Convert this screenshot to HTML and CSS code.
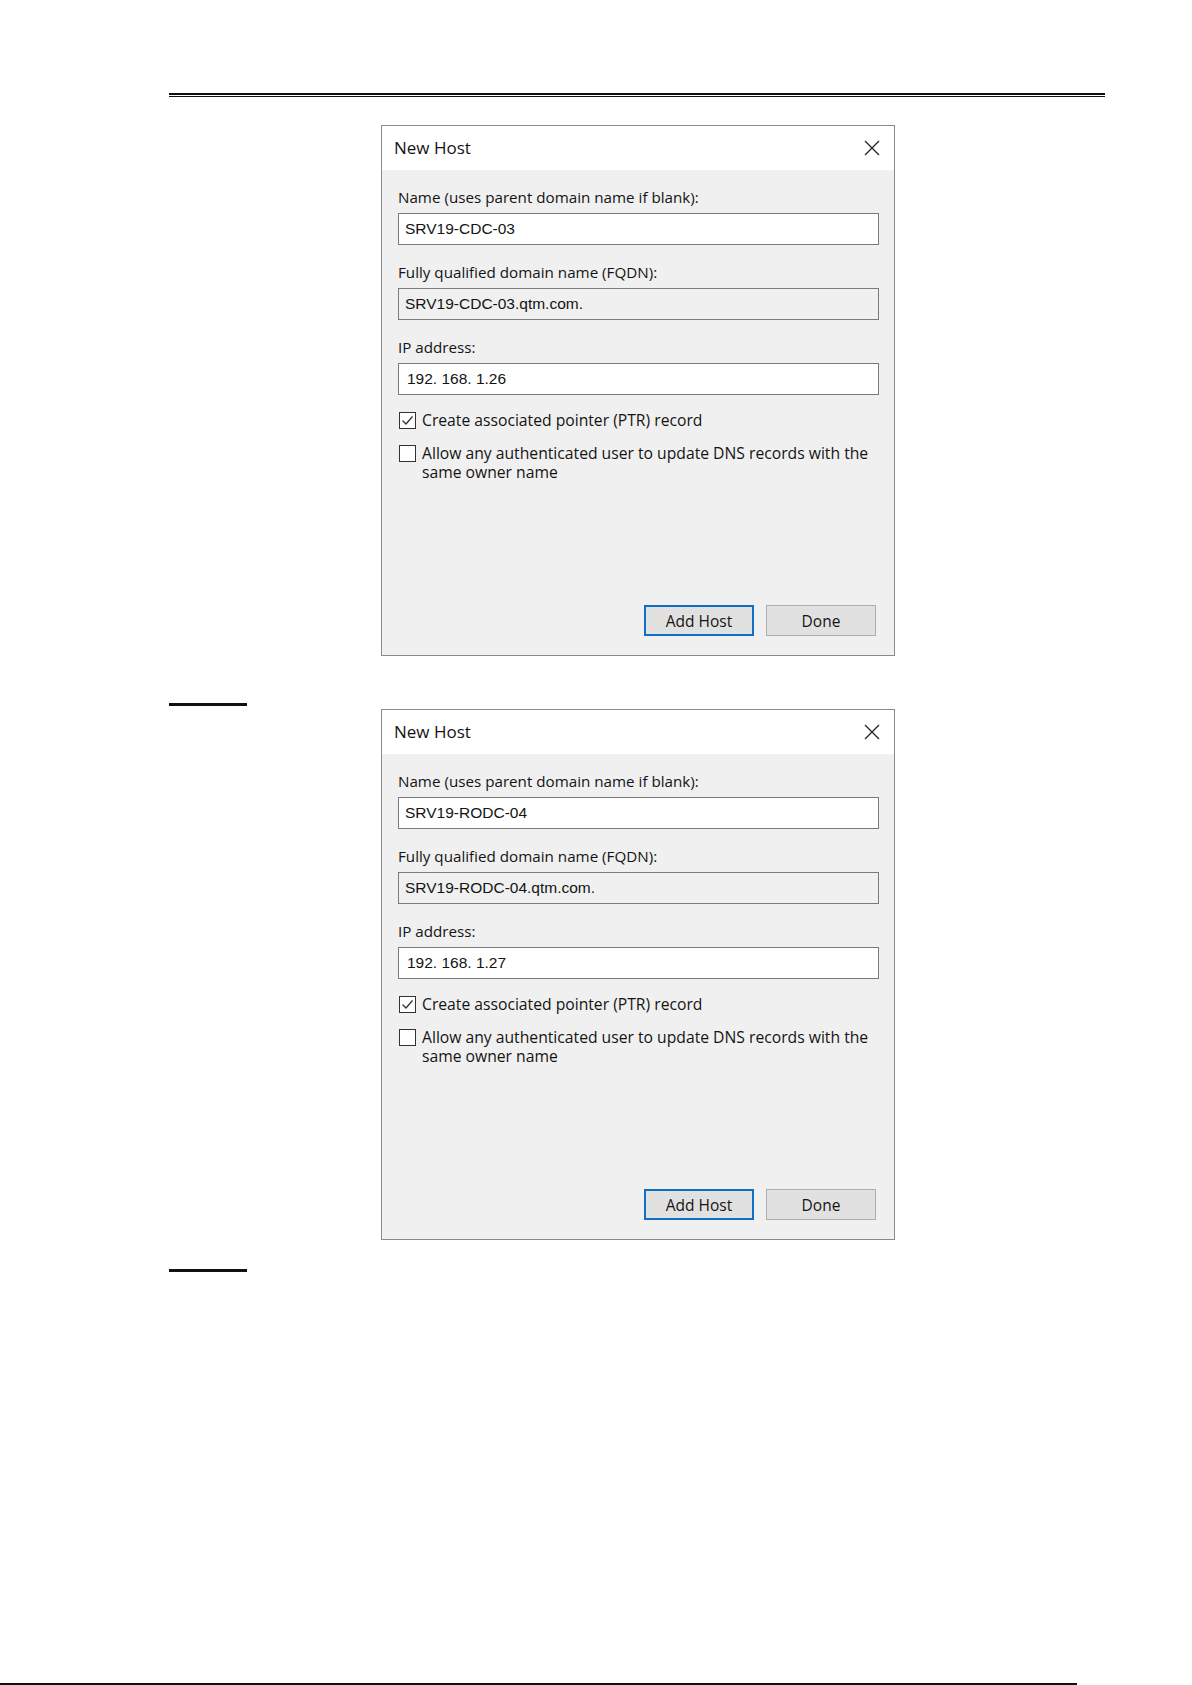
FILE: index.html
```html
<!DOCTYPE html>
<html>
	<head>
		<meta charset="UTF-8">
		<title>New Host</title>
		<link rel="stylesheet" href="styles.css">
	</head>
	<body>
		<div class="page">
			<div class="rule-double"></div>

			<div class="dialog first">
				<div class="dialog-title">
					<span>New Host</span>
					<svg class="dialog-close" width="16" height="16" viewBox="0 0 16 16"><path d="M1 1L15 15M15 1L1 15" stroke="#222" stroke-width="1.3" fill="none"/></svg>
				</div>
				<div class="dialog-body">
					<div class="field-label">Name (uses parent domain name if blank):</div>
					<div class="field-box">SRV19-CDC-03</div>
					<div class="field-label">Fully qualified domain name (FQDN):</div>
					<div class="field-box readonly">SRV19-CDC-03.qtm.com.</div>
					<div class="field-label">IP address:</div>
					<div class="field-box ip">192. 168. 1.26</div>
					<div class="check-row">
						<span class="check-box"><svg width="15" height="15" viewBox="0 0 15 15"><path d="M2.5 7.5L6 11L12.5 3.5" stroke="#333" stroke-width="1.3" fill="none"/></svg></span>
						<span class="check-text">Create associated pointer (PTR) record</span>
					</div>
					<div class="check-row second">
						<span class="check-box"></span>
						<span class="check-text">Allow any authenticated user to update DNS records with the same owner name</span>
					</div>
					<div class="dialog-buttons">
						<button class="btn btn-default">Add Host</button>
						<button class="btn">Done</button>
					</div>
				</div>
			</div>

			<div class="rule-short"></div>

			<div class="dialog">
				<div class="dialog-title">
					<span>New Host</span>
					<svg class="dialog-close" width="16" height="16" viewBox="0 0 16 16"><path d="M1 1L15 15M15 1L1 15" stroke="#222" stroke-width="1.3" fill="none"/></svg>
				</div>
				<div class="dialog-body">
					<div class="field-label">Name (uses parent domain name if blank):</div>
					<div class="field-box">SRV19-RODC-04</div>
					<div class="field-label">Fully qualified domain name (FQDN):</div>
					<div class="field-box readonly">SRV19-RODC-04.qtm.com.</div>
					<div class="field-label">IP address:</div>
					<div class="field-box ip">192. 168. 1.27</div>
					<div class="check-row">
						<span class="check-box"><svg width="15" height="15" viewBox="0 0 15 15"><path d="M2.5 7.5L6 11L12.5 3.5" stroke="#333" stroke-width="1.3" fill="none"/></svg></span>
						<span class="check-text">Create associated pointer (PTR) record</span>
					</div>
					<div class="check-row second">
						<span class="check-box"></span>
						<span class="check-text">Allow any authenticated user to update DNS records with the same owner name</span>
					</div>
					<div class="dialog-buttons">
						<button class="btn btn-default">Add Host</button>
						<button class="btn">Done</button>
					</div>
				</div>
			</div>

			<div class="rule-short last"></div>

			<div class="footer-line"></div>
		</div>
	</body>
</html>
```

FILE: styles.css
```css
body {
	margin: 0;
	background-color: #fff;
}
.page {
	width: 1192px;
	height: 1685px;
	display: flex;
	flex-direction: column;
	overflow: hidden;
}
.rule-double {
	margin: 93px 0 0 169px;
	width: 936px;
	height: 1px;
	border-top: 2px solid #111;
	border-bottom: 1px solid #111;
}
.dialog {
	margin-left: 381px;
	width: 512px;
	height: 529px;
	border: 1px solid #8a8a8a;
	background-color: #f0f0f0;
	display: flex;
	flex-direction: column;
	font: 15px/20px "Open Sans", "Noto Sans", sans-serif;
	color: #141414;
}
.dialog.first {
	margin-top: 28px;
}
.dialog-title {
	height: 44px;
	flex: none;
	background-color: #fff;
	display: flex;
	align-items: center;
	justify-content: space-between;
	padding: 0 14px 0 12px;
	font-size: 17px;
}
.dialog-close {
	display: block;
}
.dialog-body {
	flex: 1;
	display: flex;
	flex-direction: column;
	padding: 17px 15px 19px 16px;
}
.field-label {
	height: 20px;
	margin-bottom: 6px;
	font-size: 15.2px;
}
.field-box {
	height: 30px;
	border: 1px solid #7a7a7a;
	background-color: #fff;
	padding-left: 6px;
	font: 15.5px/29px "Liberation Sans", Arial, sans-serif;
	margin-bottom: 17px;
}
.field-box.readonly {
	background-color: #f0f0f0;
}
.field-box.ip {
	padding-left: 8px;
}
.check-row {
	display: flex;
	align-items: flex-start;
	margin-top: -1px;
	line-height: 19px;
	font-size: 15.7px;
}
.check-row.second {
	margin-top: 14px;
}
.check-box {
	flex: none;
	width: 15px;
	height: 15px;
	margin: 1px 6px 0 1px;
	border: 1px solid #333;
	background-color: #fff;
}
.check-box svg {
	display: block;
}
.check-text {
	width: 456px;
}
.dialog-buttons {
	margin-top: auto;
	display: flex;
	justify-content: flex-end;
	gap: 12px;
	padding-right: 3px;
}
.btn {
	width: 110px;
	height: 31px;
	border: 1px solid #adadad;
	background-color: #e1e1e1;
	font: 15.5px "Open Sans", "Noto Sans", sans-serif;
	color: #141414;
	padding: 0;
}
.btn-default {
	border: 2px solid #0e6fc4;
}
.rule-short {
	margin: 47px 0 0 169px;
	width: 78px;
	height: 3px;
	background-color: #111;
}
.rule-short + .dialog {
	margin-top: 3px;
}
.rule-short.last {
	margin-top: 29px;
}
.footer-line {
	margin-top: auto;
	width: 1077px;
	height: 2px;
	background-color: #111;
}
```
